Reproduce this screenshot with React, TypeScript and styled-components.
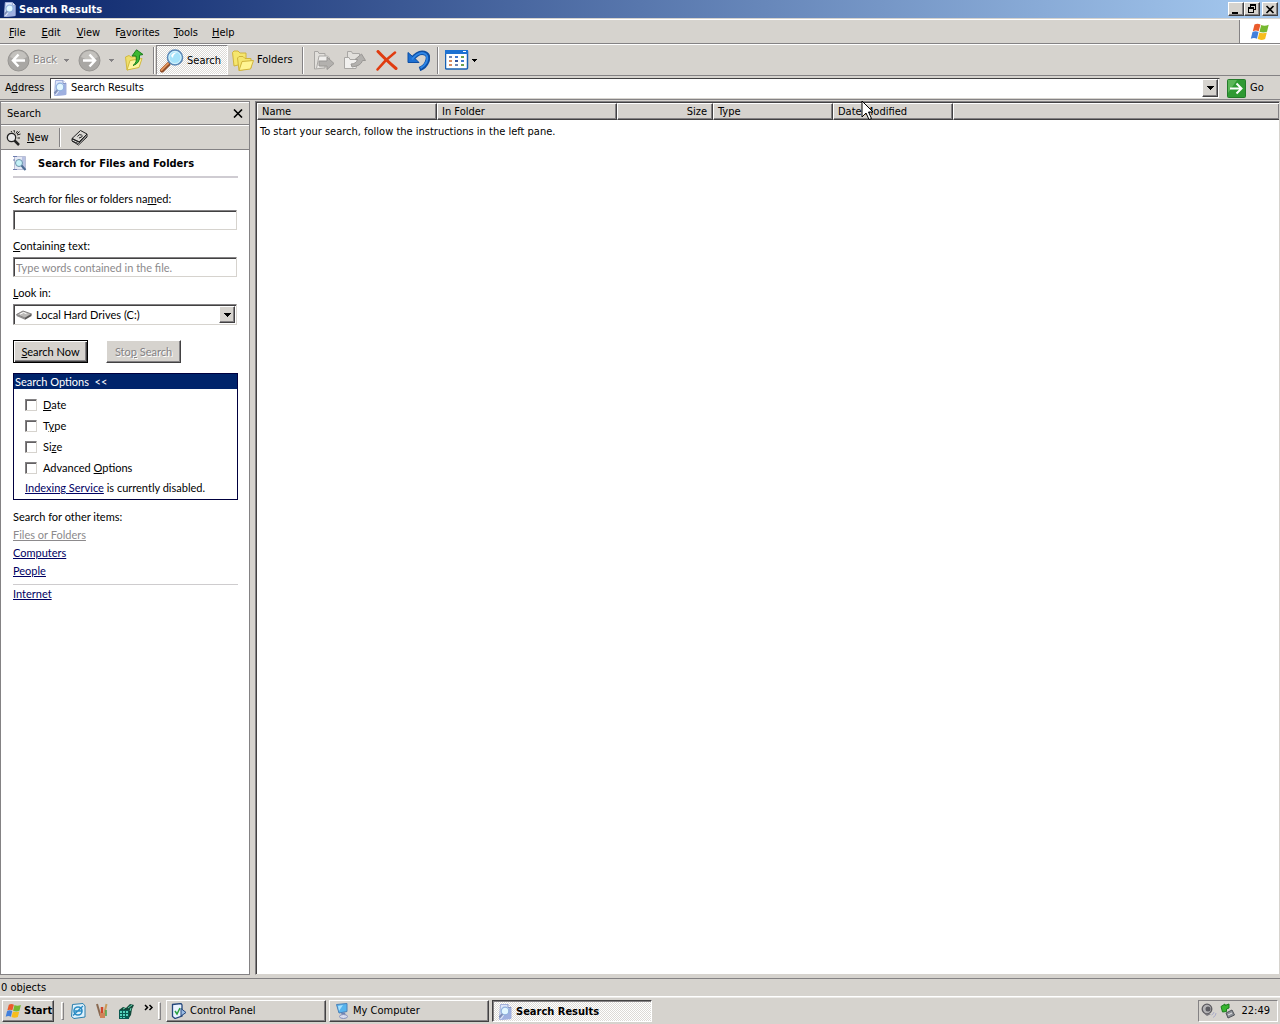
import React from 'react';
import styled, { createGlobalStyle, css } from 'styled-components';

const face = '#d6d3ce';
const shadow = '#848284';
const dark = '#424142';
const navy = '#0a246a';
const uiFont = '"DejaVu Sans Condensed", "DejaVu Sans", sans-serif';
const paneFont = 'Lato, "Liberation Sans", sans-serif';
const dither = 'repeating-conic-gradient(#ffffff 0% 25%, #dcdad6 0% 50%) 0 0 / 2px 2px';

const GlobalStyle = createGlobalStyle`
  *, *::before, *::after { box-sizing: border-box; }
  body { margin: 0; background: ${face}; }
  button, input, select { font: inherit; color: inherit; margin: 0; border-radius: 0; }
  u { text-underline-offset: 1px; text-decoration-thickness: 1px; }
  svg { display: block; flex: none; }
`;

const raised = css`
  border: 1px solid;
  border-color: #fff ${dark} ${dark} #fff;
  box-shadow: inset -1px -1px 0 ${shadow};
`;

const Screen = styled.div`
  display: flex;
  flex-direction: column;
  height: 100vh;
  min-height: 640px;
  background: ${face};
  font: 11px/14px ${uiFont};
  color: #000;
  cursor: default;
  overflow: hidden;
`;

/* ---- title bar ---- */
const TitleBar = styled.header`
  display: flex;
  align-items: center;
  gap: 2px;
  height: 18px;
  padding: 0 2px;
  color: #fff;
  background: linear-gradient(90deg, ${navy}, #a6caf0);
`;
const Title = styled.h1`
  flex: 1;
  margin: 0;
  padding-top: 1px;
  font-size: 11px;
  font-weight: 700;
`;
const CaptionButtons = styled.div`
  display: flex;
`;
const CaptionButton = styled.button<{ $apart?: boolean }>`
  ${raised}
  display: grid;
  place-items: center;
  width: 16px;
  height: 14px;
  padding: 0;
  margin-left: ${p => (p.$apart ? 2 : 0)}px;
  background: ${face};
`;

/* ---- menu ---- */
const MenuBar = styled.nav`
  display: flex;
  align-items: stretch;
  height: 25px;
  margin-top: 1px;
  padding-left: 1px;
  border-top: 1px solid #fff;
  border-bottom: 1px solid ${shadow};
`;
const MenuItem = styled.button`
  padding: 2px 8px 0;
  border: 0;
  background: none;
  &:nth-of-type(n + 4) { padding: 2px 7px 0; }
`;
const Brand = styled.div`
  display: grid;
  place-items: center;
  width: 41px;
  margin-left: auto;
  background: #fff;
  border-left: 1px solid ${shadow};
`;

/* ---- toolbar ---- */
const ToolBar = styled.div`
  display: flex;
  align-items: center;
  height: 32px;
  padding-left: 2px;
  border-top: 1px solid #fff;
  border-bottom: 1px solid ${shadow};
`;
const ToolButton = styled.button<{ $pressed?: boolean; $width?: number }>`
  display: flex;
  align-items: center;
  justify-content: ${p => (p.$width ? 'center' : 'flex-start')};
  gap: 3px;
  width: ${p => (p.$width ? `${p.$width}px` : 'auto')};
  height: 30px;
  padding: 0 ${p => (p.$width ? 0 : 3)}px;
  border: 1px solid transparent;
  background: none;
  white-space: nowrap;
  &:disabled { color: ${shadow}; text-shadow: 1px 1px 0 #fff; }
  ${p => p.$pressed && css`
    border-color: ${shadow} #fff #fff ${shadow};
    background: ${dither};
    padding: 1px 6px 0 3px;
  `}
`;
const HistoryArrow = styled.button`
  display: grid;
  place-items: center;
  width: 9px;
  height: 30px;
  padding: 0;
  border: 0;
  background: none;
`;
const Separator = styled.i<{ $height: number; $gap: number }>`
  flex: none;
  width: 2px;
  height: ${p => p.$height}px;
  margin: 0 ${p => p.$gap}px;
  border-left: 1px solid ${shadow};
  border-right: 1px solid #fff;
`;

/* ---- address bar ---- */
const AddressBar = styled.form`
  display: flex;
  align-items: center;
  height: 24px;
  padding: 1px 5px 0;
  border-bottom: 1px solid ${shadow};
`;
const AddressLabel = styled.label`
  width: 45px;
`;
const AddressField = styled.div`
  display: flex;
  flex: 1;
  align-items: center;
  height: 21px;
  padding: 0 1px;
  background: #fff;
  border: 1px solid ${dark};
  border-right-color: ${face};
  border-bottom-color: ${face};
`;
const BareInput = styled.input`
  flex: 1;
  min-width: 0;
  padding: 0 3px;
  border: 0;
  outline: 0;
  background: none;
`;
const DropButton = styled.button`
  ${raised}
  display: grid;
  place-items: center;
  width: 16px;
  height: 18px;
  padding: 0;
  background: ${face};
`;
const GoButton = styled.button`
  display: flex;
  align-items: center;
  gap: 4px;
  width: 55px;
  padding: 0 0 0 7px;
  border: 0;
  background: none;
`;

/* ---- panes ---- */
const Work = styled.main`
  display: flex;
  flex: 1;
  min-height: 0;
  gap: 5px;
  margin-top: 1px;
`;
const Pane = styled.aside`
  display: flex;
  flex-direction: column;
  flex: none;
  width: 250px;
  border: 1px solid ${shadow};
  background: #fff;
`;
const PaneBar = styled.div`
  display: flex;
  align-items: center;
  flex: none;
  height: 23px;
  padding: 0 6px;
  background: ${face};
  border-top: 1px solid #fff;
  border-bottom: 1px solid ${shadow};
`;
const PaneTools = styled(PaneBar)`
  height: 25px;
  padding: 0 5px;
`;
const PaneTitle = styled.h2`
  flex: 1;
  margin: 0;
  font-size: 11px;
  font-weight: 400;
`;
const FlatButton = styled.button`
  display: flex;
  align-items: center;
  gap: 5px;
  padding: 0;
  border: 0;
  background: none;
`;
const PaneBody = styled.form`
  display: flex;
  flex-direction: column;
  padding: 4px 11px 0 12px;
  font-family: ${paneFont};
`;
const PaneHeading = styled.h3`
  display: flex;
  align-items: center;
  gap: 11px;
  height: 24px;
  margin: 0 0 14px;
  padding-bottom: 2px;
  border-bottom: 2px solid #cfccd2;
  font: 700 11px/14px ${uiFont};
`;
const Field = styled.div`
  display: flex;
  flex-direction: column;
  gap: 4px;
  height: 47px;
  padding-right: 1px;
`;
const TextBox = styled.input`
  width: 100%;
  height: 20px;
  padding: 0 2px;
  outline: 0;
  border: 1px solid;
  border-color: ${shadow} ${face} ${face} ${shadow};
  box-shadow: inset 1px 1px 0 ${dark};
  background: #fff;
  &::placeholder { color: #8c8a8c; opacity: 1; }
`;
const Combo = styled.div`
  display: grid;
  grid-template-columns: 18px 1fr 16px;
  align-items: center;
  height: 21px;
  padding: 1px;
  border: 1px solid;
  border-color: ${shadow} ${face} ${face} ${shadow};
  box-shadow: inset 1px 1px 0 ${dark};
  > * { grid-row: 1; }
`;
const ComboSelect = styled.select`
  grid-column: 1 / -1;
  height: 17px;
  padding: 0 18px 0 21px;
  border: 0;
  outline: 0;
  appearance: none;
  background: none;
`;
const ComboIcon = styled.span`
  grid-column: 1;
  padding-left: 1px;
  pointer-events: none;
`;
const ComboArrow = styled.span`
  ${raised}
  grid-column: 3;
  display: grid;
  place-items: center;
  height: 17px;
  background: ${face};
  pointer-events: none;
`;
const Actions = styled.div`
  display: flex;
  gap: 18px;
  margin: 7px 0 10px;
`;
const PushButton = styled.button<{ $primary?: boolean }>`
  width: 75px;
  height: 23px;
  padding: 0;
  background: ${face};
  border: 1px solid;
  border-color: #fff ${dark} ${dark} #fff;
  box-shadow: inset -1px -1px 0 ${shadow};
  ${p => p.$primary && css`
    border-color: #000;
    box-shadow: inset 1px 1px 0 #fff, inset -1px -1px 0 ${dark}, inset -2px -2px 0 ${shadow};
  `}
  &:disabled { color: ${shadow}; text-shadow: 1px 1px 0 #fff; }
`;
const Options = styled.fieldset`
  display: flex;
  flex-direction: column;
  min-width: 0;
  margin: 0;
  padding: 0;
  border: 1px solid #00003f;
`;
const OptionsToggle = styled.button`
  height: 15px;
  padding: 0 1px;
  border: 0;
  background: #00246b;
  color: #fff;
  line-height: 14px;
  text-align: left;
  white-space: pre;
`;
const OptionList = styled.div`
  display: flex;
  flex-direction: column;
  padding: 5px 11px 4px;
`;
const Option = styled.label`
  display: flex;
  align-items: center;
  gap: 6px;
  height: 21px;
`;
const Check = styled.input`
  width: 12px;
  height: 12px;
  appearance: none;
  border: 1px solid;
  border-color: ${shadow} ${face} ${face} ${shadow};
  box-shadow: inset 1px 1px 0 #636163;
  background: #fff;
`;
const Note = styled.p`
  margin: 3px 0 0;
`;
const Link = styled.a<{ $muted?: boolean }>`
  color: ${p => (p.$muted ? '#8c8a8c' : '#000063')};
  text-decoration: underline;
  text-underline-offset: 1px;
`;
const Others = styled.div`
  display: flex;
  flex-direction: column;
  align-items: flex-start;
  margin-top: 8px;
  line-height: 18px;
`;
const Rule = styled.hr`
  width: 100%;
  margin: 4px 0 0;
  border: 0;
  border-top: 1px solid #ceccce;
`;

/* ---- results ---- */
const Results = styled.section`
  flex: 1;
  min-width: 0;
  border: 1px solid;
  border-color: ${shadow} ${face} ${face} ${shadow};
  box-shadow: inset 1px 1px 0 ${dark};
  padding: 1px 0 0 1px;
  background: #fff;
`;
const ResultTable = styled.table`
  width: 100%;
  table-layout: fixed;
  border-collapse: separate;
  border-spacing: 0;
`;
const HeadCell = styled.th<{ $width?: number; $right?: boolean }>`
  position: relative;
  width: ${p => (p.$width ? `${p.$width}px` : 'auto')};
  height: 17px;
  padding: 0 5px 0 4px;
  font-weight: 400;
  text-align: ${p => (p.$right ? 'right' : 'left')};
  background: ${face};
  border: solid;
  border-width: 1px ${p => (p.$width ? 1 : 0)}px 1px 1px;
  border-color: #fff ${dark} ${dark} #fff;
  box-shadow: inset -1px -1px 0 ${shadow};
`;
const MessageCell = styled.td`
  padding: 5px 3px;
`;
const Pointer = styled.svg`
  position: absolute;
  z-index: 1;
  left: 27px;
  top: -4px;
`;

/* ---- status + taskbar ---- */
const StatusBar = styled.footer`
  height: 18px;
  margin-top: 3px;
  padding: 2px 1px 0;
  border-top: 1px solid ${shadow};
`;
const TaskBar = styled.footer`
  display: flex;
  align-items: center;
  height: 28px;
  padding: 1px 2px 0;
  border-top: 1px solid #fff;
  box-shadow: inset 0 1px 0 #eceae7;
`;
const StartButton = styled.button`
  ${raised}
  display: flex;
  align-items: center;
  gap: 2px;
  width: 52px;
  height: 22px;
  padding: 0 2px;
  background: ${face};
  font-weight: 700;
`;
const Grip = styled.i<{ $left: number; $right: number }>`
  width: 3px;
  height: 18px;
  margin: 0 ${p => p.$right}px 0 ${p => p.$left}px;
  border: 1px solid;
  border-color: #fff ${shadow} ${shadow} #fff;
`;
const QuickLaunch = styled.div`
  display: flex;
  align-items: center;
  gap: 8px;
`;
const TaskButtons = styled.div`
  display: flex;
  flex: 1;
  gap: 3px;
`;
const TaskButton = styled.button<{ $active?: boolean }>`
  ${raised}
  display: flex;
  align-items: center;
  gap: 3px;
  flex: 0 1 160px;
  height: 22px;
  padding: 0 4px;
  background: ${face};
  ${p => p.$active && css`
    border-color: ${dark} #fff #fff ${dark};
    box-shadow: inset 1px 1px 0 ${shadow};
    background: ${dither};
    font-weight: 700;
    padding-top: 2px;
  `}
`;
const Tray = styled.div`
  display: flex;
  align-items: center;
  gap: 3px;
  height: 22px;
  padding: 0 7px 0 2px;
  border: 1px solid;
  border-color: ${shadow} #fff #fff ${shadow};
`;
const Clock = styled.time`
  margin-left: 3px;
`;

/* ---- drawings ---- */
const Arrow = ({ color = '#000' }: { color?: string }) => (
  <svg width="7" height="4" viewBox="0 0 7 4" shapeRendering="crispEdges"><path d="M0 0h7v1H6v1H5v1H4v1H3V3H2V2H1V1H0z" fill={color} /></svg>
);
const SmallArrow = ({ color = '#000' }: { color?: string }) => (
  <svg width="5" height="3" viewBox="0 0 5 3" shapeRendering="crispEdges"><path d="M0 0h5v1H4v1H3v1H2V2H1V1H0z" fill={color} /></svg>
);
const PageLens = ({ size = 16 }: { size?: number }) => (
  <svg width={size} height={size} viewBox="0 0 16 16">
    <path d="M3.5.5h7.500l3 3v11l-11.500 1z" fill="#dde6fa" stroke="#a3b1dc" />
    <path d="M12 4h2v11l-10 .8z" fill="#9fb0e0" />
    <path d="M11 .5v3h3" fill="#fff" stroke="#8797c8" />
    <circle cx="8" cy="7" r="3.800" fill="#e2f7ff" stroke="#8fb0de" strokeWidth="1.200" />
    <path d="M5.500 10 2.500 13.500" stroke="#7f8fb8" strokeWidth="2" />
  </svg>
);
const PageLensSmall = () => (
  <svg width="14" height="16" viewBox="0 0 14 16">
    <path d="M1.500.5h11v13h-11z" fill="#e6e9f5" stroke="#b9bfd6" />
    <path d="M9 1h3v12H9z" fill="#b9c2e2" />
    <path d="M0 .5h4M0 4h2M0 13.500h4" stroke="#6d7cae" />
    <circle cx="6" cy="7" r="3.500" fill="#c4f1f7" stroke="#6b93ab" />
    <path d="m8.500 9.500 4 4.500" stroke="#4d6d92" strokeWidth="2" />
  </svg>
);
const Flag = ({ w, h }: { w: number; h: number }) => (
  <svg width={w} height={h} viewBox="0 0 20 18">
    <path d="M4.500 1.500Q7.500-.2 10.500 1.500L8.700 8.200Q6 6.600 2.800 8.200z" fill="#ea5b2c" />
    <path d="M11.200 2q3.300 1.500 7.500-.2L17 8.700q-3.800 1.500-7.500 0z" fill="#76b82f" />
    <path d="M2.500 9q3-1.600 6 0L7 15.700q-3-1.600-6.200 0z" fill="#4180dc" />
    <path d="M9.300 9.500q3.600 1.400 7.500 0l-1.700 6.500q-3.800 1.700-7.400.1z" fill="#f7bd1c" />
  </svg>
);
const NavCircle = ({ back }: { back?: boolean }) => (
  <svg width="23" height="23" viewBox="0 0 23 23">
    <circle cx="11.500" cy="11.500" r="10.500" fill="#a9a7a4" stroke="#979592" />
    <path d="M3 8a9 9 0 0 1 17 0q-8 5-17 0z" fill="#c3c1bd" />
    <g transform={back ? undefined : 'translate(23 0) scale(-1 1)'} fill="none" stroke="#fff" strokeWidth="2.500">
      <path d="M11.500 5.500 6 11.500l5.500 6M6.500 11.500H18" />
    </g>
  </svg>
);
const UpFolder = () => (
  <svg width="20" height="22" viewBox="0 0 20 22">
    <path d="M1.500 8 5 6.500 7 8l8-1v10L3 21z" fill="#efdf6c" stroke="#d2b93e" />
    <path d="m3 21 3-9.500 12-2L15 18.500z" fill="#fdf5a0" stroke="#d2b93e" />
    <path d="M9 16.500q4.500-3 3-9.500H8L12.500.8 19 5.500l-3.500.7q1 8-6.500 10.300z" fill="#3cb832" stroke="#1a7f1d" />
  </svg>
);
const BigLens = () => (
  <svg width="24" height="24" viewBox="0 0 24 24">
    <path d="m8.500 15-6.500 6.500" stroke="#8b4a25" strokeWidth="4" strokeLinecap="round" />
    <path d="m8 14.500-6.500 6.500" stroke="#e0935c" strokeWidth="2" strokeLinecap="round" />
    <circle cx="15" cy="8.500" r="7.500" fill="#a6e3fa" stroke="#5b87b5" strokeWidth="1.600" />
    <circle cx="15" cy="8.500" r="6" fill="none" stroke="#d9f3fd" />
    <path d="M11 7q1.500-4 6-3.500Q13 5 13 9z" fill="#fff" />
  </svg>
);
const Folders = () => (
  <svg width="22" height="21" viewBox="0 0 22 21">
    <path d="M.5 2.500 2 1h4l2 2h6v10l-12 3z" fill="#f5e66e" stroke="#d0b43c" />
    <path d="M5.500 8 7 6.500h4l2 2h6V18l-12 2.500z" fill="#f5e66e" stroke="#d0b43c" />
    <path d="m7 20.500 3-9 11.500-1L18.500 19z" fill="#fff592" stroke="#d0b43c" />
  </svg>
);
const MoveTo = () => (
  <svg width="22" height="20" viewBox="0 0 22 20" fill="#e2e0dc" stroke="#a9a7a4">
    <path d="M1.500 19V1.500H5l1 2h6V18z" />
    <path d="M3.500 18.500 6 6h8.500l2 2v3" fill="#f1f0ee" />
    <path d="M6 11h8V7l7 6.500-7 6V16H6z" fill="#b3b1ae" stroke="#9a9895" />
  </svg>
);
const CopyTo = () => (
  <svg width="23" height="20" viewBox="0 0 23 20" fill="#e2e0dc" stroke="#a9a7a4">
    <path d="M4.500 14V1.500h4l1 2h7V14z" />
    <path d="M1.500 18.500V7.500H6l1 2h8l-2 9z" fill="#f1f0ee" />
    <path d="M8 14q5 0 6.500-4.500H12L18.500 4l4 6.500h-3Q18 16 9 17z" fill="#b3b1ae" stroke="#9a9895" />
  </svg>
);
const DeleteX = () => (
  <svg width="22" height="21" viewBox="0 0 22 21" fill="none" stroke="#e03c10" strokeLinecap="round">
    <path d="M2 1.500Q9 9 20 18.500" strokeWidth="3" />
    <path d="M19 2.500Q9 10 1.500 19.500" strokeWidth="2.500" />
  </svg>
);
const Undo = () => (
  <svg width="23" height="21" viewBox="0 0 23 21" fill="none">
    <path d="M5 9.500Q11 1.500 17 3t3 9q-2 5-7.500 7" stroke="#0d4ea3" strokeWidth="4.500" />
    <path d="M1 2.500V12.500h11L8.500 9 5 6z" fill="#1c6fd2" stroke="#0d4ea3" />
    <path d="M5 9.500Q11 2 16.500 3.200T19.500 12q-2 4-6 6.200" stroke="#2f86e6" strokeWidth="2" />
  </svg>
);
const Views = () => (
  <svg width="24" height="20" viewBox="0 0 24 20">
    <rect x=".5" y=".5" width="22" height="18.500" rx="1" fill="#fff" stroke="#1761b4" strokeWidth="1.500" />
    <path d="M0 0h23v4H0z" fill="#1d72d2" />
    <path d="M18 1.500h3" stroke="#fff" />
    <g shapeRendering="crispEdges">
      <path d="M4 6h3v2H4zM10 14h3v2h-3z" fill="#6d86b5" /><path d="M10 6h3v2h-3zM16 10h3v2h-3z" fill="#3f79d0" />
      <path d="M16 6h3v2h-3zM16 14h3v2h-3z" fill="#6ba24e" /><path d="M4 10h3v2H4zM4 14h3v2H4z" fill="#d68a62" />
      <path d="M10 10h3v2h-3z" fill="#33549c" />
    </g>
  </svg>
);
const GoIcon = () => (
  <svg width="19" height="19" viewBox="0 0 19 19">
    <rect x=".5" y=".5" width="18" height="18" rx="1" fill="#2f9a33" stroke="#237b2a" />
    <path d="M1 1h9L1 14z" fill="#5cb658" />
    <path d="M3 9.500h11M9.500 4.500l5 5-5 5" fill="none" stroke="#fff" strokeWidth="2" />
  </svg>
);
const NewLens = () => (
  <svg width="16" height="16" viewBox="0 0 16 16" fill="none" stroke="#222">
    <circle cx="5.500" cy="7.500" r="4.200" fill="#e9e9e9" strokeWidth="1.300" />
    <path d="m8.500 10.500 4.500 4.500" strokeWidth="2.500" />
    <path d="m8 0 .5 2.500M11.500 1 10 3.500M14.500 4 11 5M14 8h-2.500M5 1l1 1.500M13.500 1.500 11 4" />
  </svg>
);
const Book = () => (
  <svg width="17" height="17" viewBox="0 0 17 17" stroke="#222" strokeLinejoin="round">
    <path d="M1 9.500 9.500 1.500 16 5 8 13z" fill="#d9d7d3" />
    <path d="M1 9.500v2.500L7.500 16 16 8V5L8 13z" fill="#f6f5f3" />
    <path d="m1 12 6.500 2.500L15.500 7M1 10l7 3" fill="none" />
    <path d="M6.500 7.500Q8 4.500 10.500 6T8 9" fill="none" />
  </svg>
);
const Drive = () => (
  <svg width="16" height="10" viewBox="0 0 16 10">
    <path d="M.5 4.500 7 1l8.500 3L9 8z" fill="#bcbab8" stroke="#807e7e" />
    <path d="M.5 4.500 9 8v1.800L.5 6z" fill="#8f8d8d" /><path d="M9 8l6.500-4v2L9 9.800z" fill="#555353" />
    <path d="m4 4.200 3.500-1.700 3 1.200" stroke="#fff" fill="none" />
  </svg>
);
const Outlook = () => (
  <svg width="16" height="16" viewBox="0 0 16 16">
    <path d="M2.500 1.500 13 .5l2 2.500v11l-11 1.500-2.500-2z" fill="#dff1fb" stroke="#2a7fae" />
    <circle cx="8" cy="8" r="4" fill="none" stroke="#2b8cc4" strokeWidth="1.600" />
    <path d="M5 8h7M13 3 3 12.500" stroke="#2b8cc4" strokeWidth="1.400" />
  </svg>
);
const Brushes = () => (
  <svg width="16" height="16" viewBox="0 0 16 16" fill="none">
    <path d="m3 1 3.500 12" stroke="#8a6a52" strokeWidth="2" /><path d="M8 4v10" stroke="#d04428" strokeWidth="2.500" />
    <path d="m12.500 1-3 13" stroke="#c99a58" strokeWidth="2" /><path d="M12 7v6" stroke="#49a046" strokeWidth="1.500" />
    <path d="M6 10h5v5H6z" fill="#cf8358" />
  </svg>
);
const Cubes = () => (
  <svg width="17" height="17" viewBox="0 0 17 17">
    <path d="M1 7h10v9H1z" fill="#0b5a52" /><path d="m1 7 4-3 3 1 4-4 4 1-2 4-1 6-2 3V7z" fill="#134a3b" />
    <path d="M2 8h2v2H2zM5 8h2v2H5zM8 8h2v2H8zM2 11h2v2H2zM5 11h2v2H5zM8 11h2v2H8zM2 14h2v1H2zM5 14h2v1H5z" fill="#54d3bb" />
    <path d="m5 6 2-1M10 5l4-3M12 8l1-3" stroke="#62d2ae" />
  </svg>
);
const Panel = () => (
  <svg width="16" height="16" viewBox="0 0 16 16">
    <path d="M1.500 1.500 10 .5l1 1.500v11L4 15.500l-2.500-2z" fill="#eaf3ff" stroke="#24477c" strokeWidth="1.300" />
    <path d="m4 8 2 3 3-6" fill="none" stroke="#2ba040" strokeWidth="1.500" />
    <path d="m10 5.500 5 4-5 3.500z" fill="#9bbbe3" stroke="#24477c" />
  </svg>
);
const Monitor = () => (
  <svg width="16" height="16" viewBox="0 0 16 16">
    <path d="M2.500 1.500 13 .5v8L5 10z" fill="#58b5ee" stroke="#4a80b8" />
    <path d="M4 3 9 2 5 8z" fill="#a8e1ff" />
    <path d="m7 10 4-.5.500 2.500H8z" fill="#6f84b4" />
    <ellipse cx="9.500" cy="13.500" rx="4" ry="2" fill="#d9dcee" stroke="#8590b8" />
  </svg>
);
const Speaker = () => (
  <svg width="16" height="16" viewBox="0 0 16 16">
    <circle cx="6" cy="6" r="4.800" fill="#b4b3b5" stroke="#5c5b60" strokeWidth="1.300" />
    <circle cx="7" cy="6" r="2.500" fill="#5c5c62" />
    <path d="m3 10.500 3 2.500 4-2" fill="#77767b" />
    <path d="M10.500 12q2-.8 2.500-3M12 14.500q3-1.500 3-4.500" fill="none" stroke="#a9abc9" />
  </svg>
);
const Eject = () => (
  <svg width="15" height="16" viewBox="0 0 15 16">
    <path d="m6 10 6-3 2.500 5L8 15z" fill="#8d9197" stroke="#4e5257" /><path d="m8 12 4-2" stroke="#e8e8e8" />
    <path d="M1 3.500 5 1v1.500L9 1v4L6.500 6v2.500L2.500 9z" fill="#38b52f" stroke="#1c7d1d" />
  </svg>
);

const columns = [
  { label: 'Name', width: 180 },
  { label: 'In Folder', width: 180 },
  { label: 'Size', width: 96, right: true },
  { label: 'Type', width: 120 },
  { label: 'Date Modified', width: 120, pointer: true },
];
const menus = [['', 'F', 'ile'], ['', 'E', 'dit'], ['', 'V', 'iew'], ['F', 'a', 'vorites'], ['', 'T', 'ools'], ['', 'H', 'elp']];
const options = [['', 'D', 'ate'], ['T', 'y', 'pe'], ['Si', 'z', 'e'], ['Advanced ', 'O', 'ptions']];
const Key = ({ parts }: { parts: string[] }) => <span>{parts[0]}<u>{parts[1]}</u>{parts[2]}</span>;
const stop = (e: React.FormEvent) => e.preventDefault();

export default function App() {
  return (
    <Screen>
      <GlobalStyle />
      <TitleBar>
        <PageLens size={15} />
        <Title>Search Results</Title>
        <CaptionButtons>
          <CaptionButton aria-label="Minimize"><svg width="10" height="9"><path d="M1 7h6v2H1z" /></svg></CaptionButton>
          <CaptionButton aria-label="Restore">
            <svg width="10" height="10" shapeRendering="crispEdges"><path d="M3 0h6v6H7V5h1V2H4v1H3zM1 3h6v6H1zm1 2v3h4V5z" fillRule="evenodd" /></svg>
          </CaptionButton>
          <CaptionButton aria-label="Close" $apart><svg width="10" height="9"><path d="m1.500 1 7 7m0-7-7 7" stroke="#000" strokeWidth="1.600" /></svg></CaptionButton>
        </CaptionButtons>
      </TitleBar>
      <MenuBar>
        {menus.map(m => <MenuItem key={m.join('')}><Key parts={m} /></MenuItem>)}
        <Brand><Flag w={20} h={18} /></Brand>
      </MenuBar>
      <ToolBar>
        <ToolButton disabled $width={60}><NavCircle back />Back</ToolButton>
        <HistoryArrow disabled aria-label="Back history"><SmallArrow color={shadow} /></HistoryArrow>
        <ToolButton disabled $width={36} aria-label="Forward"><NavCircle /></ToolButton>
        <HistoryArrow disabled aria-label="Forward history"><SmallArrow color={shadow} /></HistoryArrow>
        <ToolButton $width={36} aria-label="Up"><UpFolder /></ToolButton>
        <Separator $height={27} $gap={1} />
        <ToolButton $pressed><BigLens />Search</ToolButton>
        <ToolButton><Folders />Folders</ToolButton>
        <Separator $height={27} $gap={5} />
        <ToolButton disabled $width={30} aria-label="Move To"><MoveTo /></ToolButton>
        <ToolButton disabled $width={32} aria-label="Copy To"><CopyTo /></ToolButton>
        <ToolButton $width={32} aria-label="Delete"><DeleteX /></ToolButton>
        <ToolButton $width={32} aria-label="Undo"><Undo /></ToolButton>
        <Separator $height={27} $gap={2} />
        <ToolButton aria-label="Views"><Views /><SmallArrow /></ToolButton>
      </ToolBar>
      <AddressBar onSubmit={stop}>
        <AddressLabel htmlFor="address">A<u>d</u>dress</AddressLabel>
        <AddressField>
          <PageLens />
          <BareInput id="address" defaultValue="Search Results" />
          <DropButton type="button" aria-label="Show addresses"><Arrow /></DropButton>
        </AddressField>
        <GoButton><GoIcon />Go</GoButton>
      </AddressBar>
      <Work>
        <Pane>
          <PaneBar>
            <PaneTitle>Search</PaneTitle>
            <FlatButton aria-label="Close pane"><svg width="10" height="9"><path d="m1 .5 8 8m0-8-8 8" stroke="#000" strokeWidth="1.600" /></svg></FlatButton>
          </PaneBar>
          <PaneTools>
            <FlatButton><NewLens /><span><u>N</u>ew</span></FlatButton>
            <Separator $height={19} $gap={10} />
            <FlatButton aria-label="Search companion"><Book /></FlatButton>
          </PaneTools>
          <PaneBody onSubmit={stop}>
            <PaneHeading><PageLensSmall />Search for Files and Folders</PaneHeading>
            <Field>
              <label htmlFor="named">Search for files or folders na<u>m</u>ed:</label>
              <TextBox id="named" />
            </Field>
            <Field>
              <label htmlFor="containing"><u>C</u>ontaining text:</label>
              <TextBox id="containing" placeholder="Type words contained in the file." />
            </Field>
            <Field>
              <label htmlFor="lookin"><u>L</u>ook in:</label>
              <Combo>
                <ComboSelect id="lookin"><option>Local Hard Drives (C:)</option></ComboSelect>
                <ComboIcon><Drive /></ComboIcon>
                <ComboArrow><Arrow /></ComboArrow>
              </Combo>
            </Field>
            <Actions>
              <PushButton $primary><u>S</u>earch Now</PushButton>
              <PushButton type="button" disabled>Sto<u>p</u> Search</PushButton>
            </Actions>
            <Options aria-label="Search options">
              <OptionsToggle type="button">{'Search Options  <<'}</OptionsToggle>
              <OptionList>
                {options.map(o => (
                  <Option key={o.join('')}><Check type="checkbox" /><Key parts={o} /></Option>
                ))}
                <Note><Link href="#indexing">Indexing Service</Link> is currently disabled.</Note>
              </OptionList>
            </Options>
            <Others>
              <span>Search for other items:</span>
              <Link href="#files" $muted>Files or Folders</Link>
              <Link href="#computers">Computers</Link>
              <Link href="#people">People</Link>
              <Rule />
              <Link href="#internet">Internet</Link>
            </Others>
          </PaneBody>
        </Pane>
        <Results>
          <ResultTable>
            <thead>
              <tr>
                {columns.map(c => (
                  <HeadCell key={c.label} $width={c.width} $right={c.right}>
                    {c.label}
                    {c.pointer && (
                      <Pointer width="13" height="21" viewBox="0 0 13 21">
                        <path d="M1 1v16l4-4 3 6.500 2.500-1L7.500 12H12z" fill="#fff" stroke="#000" />
                      </Pointer>
                    )}
                  </HeadCell>
                ))}
                <HeadCell aria-hidden="true" />
              </tr>
            </thead>
            <tbody>
              <tr><MessageCell colSpan={6}>To start your search, follow the instructions in the left pane.</MessageCell></tr>
            </tbody>
          </ResultTable>
        </Results>
      </Work>
      <StatusBar>0 objects</StatusBar>
      <TaskBar>
        <StartButton><Flag w={17} h={16} />Start</StartButton>
        <Grip $left={7} $right={6} />
        <QuickLaunch>
          <FlatButton aria-label="Mail"><Outlook /></FlatButton>
          <FlatButton aria-label="Paint"><Brushes /></FlatButton>
          <FlatButton aria-label="Blocks"><Cubes /></FlatButton>
          <FlatButton aria-label="More">
            <svg width="11" height="14" fill="none" stroke="#000" strokeWidth="1.500"><path d="m2 1 2.500 2.500L2 6M6.500 1 9 3.500 6.500 6" /></svg>
          </FlatButton>
        </QuickLaunch>
        <Grip $left={4} $right={5} />
        <TaskButtons>
          <TaskButton><Panel />Control Panel</TaskButton>
          <TaskButton><Monitor />My Computer</TaskButton>
          <TaskButton $active><PageLens />Search Results</TaskButton>
        </TaskButtons>
        <Tray><Speaker /><Eject /><Clock>22:49</Clock></Tray>
      </TaskBar>
    </Screen>
  );
}
